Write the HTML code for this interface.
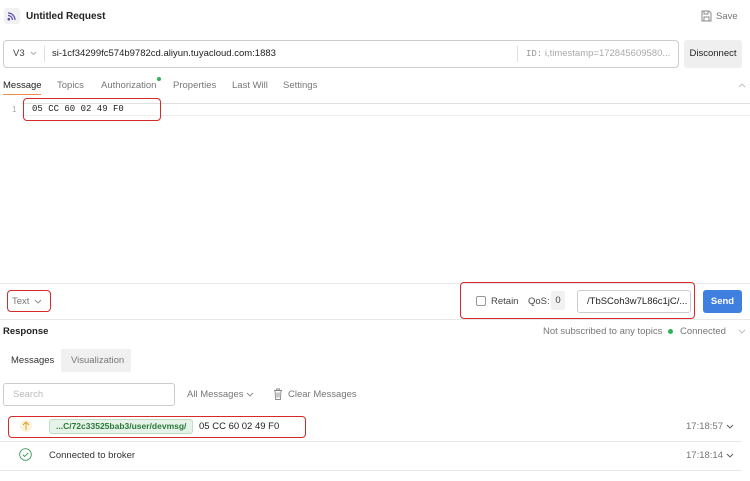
<!DOCTYPE html>
<html><head><meta charset="utf-8"><style>
*{box-sizing:border-box;margin:0;padding:0}
body{width:750px;height:481px;background:#fff;font-family:"Liberation Sans",sans-serif;font-size:9.5px;color:#222;position:relative;overflow:hidden}
.a{position:absolute;white-space:nowrap}
.g{color:#777}
.rb{position:absolute;border:1.6px solid #d42a2a;border-radius:4px}
.hl{position:absolute;height:1px;background:#e8e8e8}
.mono{font-family:"Liberation Mono",monospace}
.cv{position:absolute}
</style></head><body>
<div class="a" style="left:4px;top:8px;width:16px;height:16px;background:#f1f1f4;border-radius:3px"></div>
<svg class="a" style="left:6px;top:10px" width="12" height="12" viewBox="0 0 12 12" fill="none" stroke="#5a4fb0" stroke-width="1.2"><path d="M2 3a7 7 0 0 1 7 7M2 5.5a4.5 4.5 0 0 1 4.5 4.5"/><circle cx="2.8" cy="9.2" r="1.3" fill="#5a4fb0" stroke="none"/></svg>
<div class="a" style="left:26px;top:11px;font-size:10px;font-weight:bold">Untitled Request</div>
<svg class="a" style="left:701px;top:10px" width="11" height="12" viewBox="0 0 11 12" fill="none" stroke="#888" stroke-width="1"><path d="M1 1h7l2 2v8H1z M3 1v3h4V1 M3 11V7h5v4"/></svg>
<div class="a g" style="left:716px;top:11px;font-size:9.5px">Save</div>

<div class="a" style="left:3px;top:40px;width:676px;height:28px;border:1px solid #ccc;border-radius:4px"></div>
<div class="a" style="left:13px;top:48px;color:#444">V3</div>
<svg class="cv" style="left:30px;top:51px" width="7" height="5" viewBox="0 0 7 5" fill="none" stroke="#aaa" stroke-width="0.9"><path d="M1 1l2.5 2.5L6 1"/></svg>
<div class="a" style="left:44px;top:46px;width:1px;height:16px;background:#e0e0e0"></div>
<div class="a" style="left:52px;top:48px">si-1cf34299fc574b9782cd.aliyun.tuyacloud.com:1883</div>
<div class="a" style="left:517px;top:46px;width:1px;height:16px;background:#e0e0e0"></div>
<div class="a" style="left:526px;top:48px;color:#aaa"><span class="mono" style="font-size:9px;color:#999">ID:</span> i,timestamp=172845609580...</div>
<div class="a" style="left:684px;top:40px;width:58px;height:28px;background:#efefef;border-radius:3px;text-align:center;line-height:28px;font-size:9.5px">Disconnect</div>

<div class="a" style="left:3px;top:80px">Message</div>
<div class="a" style="left:3px;top:94px;width:38px;height:1px;background:#f08a4b"></div>
<div class="a g" style="left:57px;top:80px">Topics</div>
<div class="a g" style="left:101px;top:80px">Authorization</div>
<div class="a" style="left:157px;top:77px;width:4px;height:4px;border-radius:50%;background:#2fb15a"></div>
<div class="a g" style="left:173px;top:80px">Properties</div>
<div class="a g" style="left:232px;top:80px">Last Will</div>
<div class="a g" style="left:283px;top:80px">Settings</div>
<svg class="cv" style="left:738px;top:83px" width="8" height="5" viewBox="0 0 8 5" fill="none" stroke="#bbb" stroke-width="0.9"><path d="M1 4l3-3 3 3"/></svg>
<div class="hl" style="left:22px;top:103px;width:728px;background:#e0e0e0"></div>
<div class="hl" style="left:22px;top:115px;width:728px;background:#eee"></div>
<div class="a" style="left:12px;top:105px;color:#aaa;font-size:8px" >1</div>
<div class="a mono" style="left:32px;top:104px;font-size:9px">05 CC 60 02 49 F0</div>
<div class="rb" style="left:23px;top:98px;width:138px;height:23px"></div>

<div class="hl" style="left:0;top:283px;width:750px"></div>
<div class="a g" style="left:12px;top:296px">Text</div>
<svg class="cv" style="left:34px;top:299px" width="8" height="5" viewBox="0 0 8 5" fill="none" stroke="#888" stroke-width="0.9"><path d="M1 1l3 3 3-3"/></svg>
<div class="rb" style="left:7px;top:290px;width:44px;height:22px"></div>
<div class="a" style="left:476px;top:296px;width:10px;height:10px;border:1px solid #999;border-radius:2px"></div>
<div class="a" style="left:491px;top:296px;color:#444">Retain</div>
<div class="a" style="left:528px;top:296px;color:#444">QoS:</div>
<div class="a" style="left:551px;top:291px;width:14px;height:19px;background:#f1f1f1;border-radius:2px;text-align:center;line-height:19px;color:#444">0</div>
<div class="a" style="left:577px;top:290px;width:114px;height:23px;border:1px solid #ccc;border-radius:3px;padding-left:9px;line-height:21px">/TbSCoh3w7L86c1jC/...</div>
<div class="rb" style="left:460px;top:282px;width:235px;height:37px"></div>
<div class="a" style="left:703px;top:290px;width:39px;height:23px;background:#3f7fe0;border-radius:3px;color:#fff;text-align:center;line-height:23px;font-weight:bold">Send</div>
<div class="hl" style="left:0;top:319px;width:750px"></div>

<div class="a" style="left:3px;top:326px;font-weight:bold">Response</div>
<div class="a g" style="left:543px;top:326px">Not subscribed to any topics</div>
<div class="a" style="left:668px;top:329px;width:5px;height:5px;border-radius:50%;background:#2fb15a"></div>
<div class="a g" style="left:680px;top:326px">Connected</div>
<svg class="cv" style="left:738px;top:329px" width="8" height="5" viewBox="0 0 8 5" fill="none" stroke="#bbb" stroke-width="0.9"><path d="M1 1l3 3 3-3"/></svg>

<div class="a" style="left:11px;top:355px;color:#333">Messages</div>
<div class="a" style="left:61px;top:349px;width:70px;height:23px;background:#f0f0f0;border-radius:2px"></div>
<div class="a g" style="left:71px;top:355px">Visualization</div>

<div class="a" style="left:3px;top:383px;width:172px;height:23px;border:1px solid #ccc;border-radius:3px;padding-left:9px;line-height:21px;color:#bbb">Search</div>
<div class="a g" style="left:187px;top:389px">All Messages</div>
<svg class="cv" style="left:246px;top:392px" width="8" height="5" viewBox="0 0 8 5" fill="none" stroke="#888" stroke-width="0.9"><path d="M1 1l3 3 3-3"/></svg>
<svg class="a" style="left:273px;top:388px" width="10" height="12" viewBox="0 0 10 12" fill="none" stroke="#888" stroke-width="0.9"><path d="M1 2.5h8M3.5 2.5V1h3v1.5M2 2.5l.6 9h4.8l.6-9M4 4.5v5M6 4.5v5"/></svg>
<div class="a g" style="left:288px;top:389px">Clear Messages</div>

<div class="a" style="left:20px;top:420px;width:12px;height:12px;border-radius:50%;background:#fdf3dc"></div>
<svg class="cv" style="left:22px;top:421px" width="8" height="10" viewBox="0 0 8 10" fill="none" stroke="#d69b1c" stroke-width="0.9"><path d="M4 9V1M1 4l3-3 3 3"/></svg>
<div class="a" style="left:49px;top:419px;width:144px;height:15px;background:#e6f3e8;border:1px solid #bfdcc4;border-radius:3px;color:#2a7a3a;font-weight:bold;font-size:8.5px;line-height:13px;padding-left:6px">...C/72c33525bab3/user/devmsg/</div>
<div class="a" style="left:199px;top:421px">05 CC 60 02 49 F0</div>
<div class="rb" style="left:8px;top:416px;width:298px;height:22px"></div>
<div class="a g" style="left:686px;top:421px">17:18:57</div>
<svg class="cv" style="left:726px;top:424px" width="8" height="5" viewBox="0 0 8 5" fill="none" stroke="#555" stroke-width="0.9"><path d="M1 1l3 3 3-3"/></svg>
<div class="hl" style="left:0;top:441px;width:742px"></div>

<svg class="a" style="left:19px;top:448px" width="13" height="13" viewBox="0 0 13 13" fill="none" stroke="#3a9a5a" stroke-width="0.9"><circle cx="6.5" cy="6.5" r="5.8"/><path d="M3.8 6.7l1.8 1.8 3.6-3.6"/></svg>
<div class="a" style="left:49px;top:450px;color:#333">Connected to broker</div>
<div class="a g" style="left:686px;top:450px">17:18:14</div>
<svg class="cv" style="left:726px;top:453px" width="8" height="5" viewBox="0 0 8 5" fill="none" stroke="#555" stroke-width="0.9"><path d="M1 1l3 3 3-3"/></svg>
<div class="hl" style="left:0;top:470px;width:742px"></div>
</body></html>
